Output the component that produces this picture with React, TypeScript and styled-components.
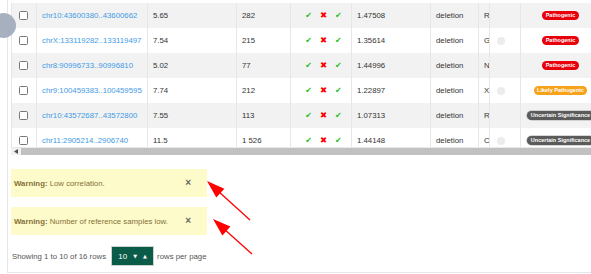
import React from 'react';
import styled, { createGlobalStyle } from 'styled-components';

const Global = createGlobalStyle`
  html, body { margin: 0; padding: 0; background: #fff; overflow: hidden; }
  body { font-family: "Liberation Sans", Arial, sans-serif; }
`;

const Page = styled.div`
  position: relative;
  width: 591px;
  height: 274px;
  overflow: hidden;
`;

const Panel = styled.div`
  margin-left: 7px;
  width: 640px;
  height: 273px;
  box-sizing: border-box;
  border-left: 1px solid #e6e6e6;
  border-bottom: 1px solid #e6e6e6;
  padding: 3px 0 0 3px;
  display: flex;
  flex-direction: column;
`;

const TableViewport = styled.div`
  height: 144px;
  overflow: hidden;
`;

const COLS = '25px 111px 89px 54px 61px 79px 48px 11px 31px 80px';

const Row = styled.div<{ $striped: boolean }>`
  display: grid;
  grid-template-columns: ${COLS};
  height: 25px;
  background: ${(p) => (p.$striped ? '#f2f2f2' : '#ffffff')};
`;

const Cell = styled.div<{ $align?: 'left' | 'center' }>`
  box-sizing: border-box;
  border-left: 1px solid #e6e6e6;
  display: flex;
  align-items: center;
  justify-content: ${(p) => (p.$align === 'center' ? 'center' : 'flex-start')};
  padding: 0 0 0 5px;
  font-size: 7.8px;
  color: #333;
  white-space: nowrap;
  overflow: hidden;
`;

const CheckCell = styled(Cell)`
  padding: 0 0 0 7px;
`;

const Checkbox = styled.span`
  width: 9px;
  height: 9px;
  box-sizing: border-box;
  border: 1px solid #777;
  border-radius: 1.5px;
  background: #fff;
`;

const Locus = styled.a`
  color: #3f9be6;
  text-decoration: none;
`;

const Marks = styled.div`
  display: flex;
  gap: 8px;
  align-items: center;
  font-family: "DejaVu Sans", sans-serif;
`;

const Mark = styled.span<{ $ok: boolean }>`
  color: ${(p) => (p.$ok ? '#20c020' : '#ff0000')};
  font-size: ${(p) => (p.$ok ? '8px' : '8.5px')};
  line-height: 1;
  margin-top: ${(p) => (p.$ok ? '1.5px' : '0')};
`;

const Dot = styled.span<{ $show: boolean }>`
  width: 8px;
  height: 8px;
  margin-left: 2px;
  border-radius: 50%;
  background: ${(p) => (p.$show ? '#ececec' : 'transparent')};
`;

const BADGE_BG: Record<string, string> = {
  Pathogenic: '#e8000b',
  'Likely Pathogenic': '#f7a21b',
  'Uncertain Significance': '#5b5b5b',
};

const Badge = styled.span<{ $kind: string }>`
  display: inline-block;
  height: 9px;
  line-height: 9px;
  padding: 0 3.5px;
  border-radius: 5px;
  background: ${(p) => BADGE_BG[p.$kind]};
  box-shadow: ${(p) => (p.$kind === 'Uncertain Significance' ? '0 0 0 0.6px #b0b0b0' : 'none')};
  color: #fff;
  font-weight: bold;
  font-size: 5.5px;
  white-space: nowrap;
`;

const BadgeCell = styled(Cell)`
  padding: 0;
  justify-content: center;
  overflow: visible;
`;

const ScrollTrack = styled.div`
  display: flex;
  height: 8px;
  background: #f1f1f1;
  border-top: 1px solid #e9e9e9;
  box-sizing: border-box;
`;

const ScrollArrow = styled.div`
  width: 10px;
  display: flex;
  align-items: center;
  justify-content: center;
`;

const ScrollThumb = styled.div`
  flex: 1;
  background: #c1c1c1;
`;

const Alerts = styled.div`
  margin-top: 14px;
  display: flex;
  flex-direction: column;
  gap: 10px;
`;

const Alert = styled.div`
  width: 196px;
  height: 28px;
  box-sizing: border-box;
  background: #fdfbc9;
  color: #86703a;
  font-size: 7.8px;
  display: flex;
  align-items: center;
  justify-content: space-between;
  padding: 0 16px 0 3px;
`;

const Close = styled.span`
  color: #666;
  font-size: 10px;
  font-weight: bold;
  line-height: 1;
`;

const Pager = styled.div`
  margin-top: 11px;
  display: flex;
  align-items: center;
  font-size: 7.8px;
  color: #555;
  padding-left: 1px;
`;

const SizeButton = styled.button`
  margin: 0 3px 0 5px;
  width: 43px;
  height: 20px;
  box-sizing: border-box;
  background: #0a5b48;
  border: 1px solid #cfcfcf;
  color: #fff;
  font-family: "Liberation Sans", Arial, sans-serif;
  font-size: 8px;
  display: flex;
  align-items: center;
  justify-content: center;
  gap: 6px;
  padding: 0;
`;

const Caret = styled.span`
  font-size: 5px;
  font-family: "DejaVu Sans", sans-serif;
`;

const Overlay = styled.svg`
  position: absolute;
  left: 0;
  top: 0;
  pointer-events: none;
`;

const SideKnob = styled.div`
  position: absolute;
  left: -9px;
  top: 13px;
  width: 25px;
  height: 25px;
  border-radius: 50%;
  background: #a6b0bf;
`;

type RowData = {
  locus: string;
  score: string;
  count: string;
  ratio: string;
  type: string;
  letter: string;
  dot: boolean;
  badge: string;
};

const rows: RowData[] = [
  { locus: 'chr10:43600380..43600662', score: '5.65', count: '282', ratio: '1.47508', type: 'deletion', letter: 'R', dot: false, badge: 'Pathogenic' },
  { locus: 'chrX:133119282..133119497', score: '7.54', count: '215', ratio: '1.35614', type: 'deletion', letter: 'G', dot: true, badge: 'Pathogenic' },
  { locus: 'chr8:90996733..90996810', score: '5.02', count: '77', ratio: '1.44996', type: 'deletion', letter: 'N', dot: false, badge: 'Pathogenic' },
  { locus: 'chr9:100459383..100459595', score: '7.74', count: '212', ratio: '1.22897', type: 'deletion', letter: 'X', dot: true, badge: 'Likely Pathogenic' },
  { locus: 'chr10:43572687..43572800', score: '7.55', count: '113', ratio: '1.07313', type: 'deletion', letter: 'R', dot: false, badge: 'Uncertain Significance' },
  { locus: 'chr11:2905214..2906740', score: '11.5', count: '1 526', ratio: '1.44148', type: 'deletion', letter: 'C', dot: true, badge: 'Uncertain Significance' },
];

function Arrow({ tail, tip }: { tail: [number, number]; tip: [number, number] }) {
  const dx = tip[0] - tail[0];
  const dy = tip[1] - tail[1];
  const len = Math.hypot(dx, dy);
  const ux = dx / len;
  const uy = dy / len;
  const headLen = 18;
  const half = 6;
  const bx = tip[0] - ux * headLen;
  const by = tip[1] - uy * headLen;
  const nx = -uy;
  const ny = ux;
  const pts = `${tip[0]},${tip[1]} ${bx + nx * half},${by + ny * half} ${bx - nx * half},${by - ny * half}`;
  return (
    <g>
      <line x1={tail[0]} y1={tail[1]} x2={bx + ux * 2} y2={by + uy * 2} stroke="#ff0000" strokeWidth={1.3} />
      <polygon points={pts} fill="#ff0000" />
    </g>
  );
}

export default function App() {
  return (
    <Page>
      <Global />
      <Panel>
        <TableViewport>
          {rows.map((r, i) => (
            <Row key={i} $striped={i % 2 === 0}>
              <CheckCell>
                <Checkbox />
              </CheckCell>
              <Cell>
                <Locus href="#">{r.locus}</Locus>
              </Cell>
              <Cell>{r.score}</Cell>
              <Cell>{r.count}</Cell>
              <Cell $align="center">
                <Marks>
                  <Mark $ok>✔</Mark>
                  <Mark $ok={false}>✖</Mark>
                  <Mark $ok>✔</Mark>
                </Marks>
              </Cell>
              <Cell>{r.ratio}</Cell>
              <Cell>{r.type}</Cell>
              <Cell>{r.letter}</Cell>
              <Cell>
                <Dot $show={r.dot} />
              </Cell>
              <BadgeCell>
                <Badge $kind={r.badge}>{r.badge}</Badge>
              </BadgeCell>
            </Row>
          ))}
        </TableViewport>
        <ScrollTrack>
          <ScrollArrow>
            <svg width="4" height="5" viewBox="0 0 4 5">
              <polygon points="0,2.5 4,0 4,5" fill="#505050" />
            </svg>
          </ScrollArrow>
          <ScrollThumb />
        </ScrollTrack>
        <Alerts>
          <Alert>
            <span>
              <b>Warning:</b> Low correlation.
            </span>
            <Close>×</Close>
          </Alert>
          <Alert>
            <span>
              <b>Warning:</b> Number of reference samples low.
            </span>
            <Close>×</Close>
          </Alert>
        </Alerts>
        <Pager>
          <span>Showing 1 to 10 of 16 rows</span>
          <SizeButton>
            <span>10</span>
            <Caret>▼</Caret>
            <Caret>▲</Caret>
          </SizeButton>
          <span>rows per page</span>
        </Pager>
      </Panel>
      <SideKnob />
      <Overlay width={591} height={274} viewBox="0 0 591 274">
        <Arrow tail={[250, 220]} tip={[207, 181]} />
        <Arrow tail={[252, 254]} tip={[213, 219]} />
      </Overlay>
    </Page>
  );
}
